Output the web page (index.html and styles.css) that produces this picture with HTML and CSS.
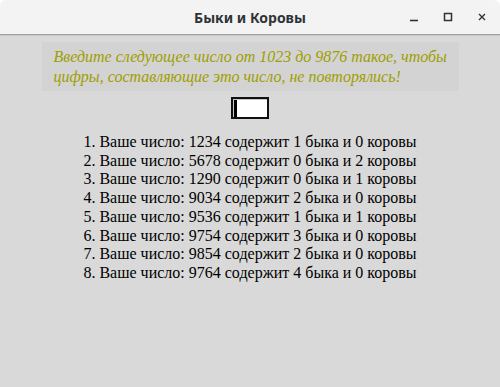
FILE: index.html
```html
<!DOCTYPE html>
<html>
<head>
    <meta charset="UTF-8">
    <title>Быки и Коровы</title>
    <link rel="stylesheet" href="styles.css">
</head>
<body>
    <div class="window">
        <header class="titlebar">
            <span></span>
            <h1 class="title">Быки и Коровы</h1>
            <div class="controls">
                <button class="ctl" aria-label="Свернуть">
                    <svg width="10" height="10" viewBox="0 0 10 10"><path d="M1 8.5h8" stroke="#2e3436" stroke-width="1.6"/></svg>
                </button>
                <button class="ctl" aria-label="Развернуть">
                    <svg width="10" height="10" viewBox="0 0 10 10"><rect x="1.5" y="1.5" width="7" height="7" fill="none" stroke="#2e3436" stroke-width="1.5"/></svg>
                </button>
                <button class="ctl" aria-label="Закрыть">
                    <svg width="10" height="10" viewBox="0 0 10 10"><path d="M2 2l6 6M8 2l-6 6" stroke="#2e3436" stroke-width="1.4"/></svg>
                </button>
            </div>
        </header>

        <main class="content">
            <p class="notice">Введите следующее число от 1023 до 9876 такое, чтобы цифры, составляющие это число, не повторялись!</p>

            <div class="entry">
                <input type="text" class="guess" id="guess">
            </div>

            <ol class="history">
                <li>Ваше число: 1234 содержит 1 быка и 0 коровы</li>
                <li>Ваше число: 5678 содержит 0 быка и 2 коровы</li>
                <li>Ваше число: 1290 содержит 0 быка и 1 коровы</li>
                <li>Ваше число: 9034 содержит 2 быка и 0 коровы</li>
                <li>Ваше число: 9536 содержит 1 быка и 1 коровы</li>
                <li>Ваше число: 9754 содержит 3 быка и 0 коровы</li>
                <li>Ваше число: 9854 содержит 2 быка и 0 коровы</li>
                <li>Ваше число: 9764 содержит 4 быка и 0 коровы</li>
            </ol>
        </main>
    </div>
</body>
</html>
```

FILE: styles.css
```css
body {
    margin: 0;
    padding: 0;
    background-color: #ffffff;
    font-family: "Liberation Serif", serif;
}

.window {
    height: 100vh;
    display: flex;
    flex-direction: column;
}

.titlebar {
    height: 34px;
    display: grid;
    grid-template-columns: 1fr auto 1fr;
    align-items: center;
    background-color: #f3f3f3;
    border-bottom: 1px solid #a2a2a2;
    border-radius: 6px 6px 0 0;
}

.title {
    margin: 0;
    font-family: "Noto Sans", sans-serif;
    font-size: 14px;
    font-weight: bold;
    color: #2e3436;
    padding-top: 1px;
}

.controls {
    display: flex;
    justify-content: flex-end;
    padding-right: 1px;
}

.ctl {
    width: 34px;
    height: 34px;
    padding: 0;
    border: none;
    background: none;
    display: flex;
    align-items: center;
    justify-content: center;
}

.content {
    flex: 1;
    background-color: #d9d9d9;
    border-top: 1px solid #c6c6c6;
    display: flex;
    flex-direction: column;
    align-items: center;
}

.notice {
    width: 403px;
    margin: 6px 0 0;
    padding: 5px 2px 4px 12px;
    background-color: #d3d3d3;
    color: #9e9e00;
    font-style: italic;
    font-size: 16px;
    line-height: 20px;
}

.entry {
    position: relative;
    margin-top: 6px;
}

.guess {
    display: block;
    box-sizing: border-box;
    width: 38px;
    height: 22px;
    border: 2px solid #111;
    box-shadow: inset 1px 1px 0 #c8c8c8;
    background-color: #fff;
    padding: 0;
    outline: none;
}

.entry::after {
    content: "";
    position: absolute;
    left: 3px;
    top: 3px;
    width: 3px;
    height: 17px;
    background-color: #000;
}

.history {
    margin: 14px 0 0;
    padding: 0;
    list-style-position: inside;
    text-align: center;
    font-size: 16px;
    line-height: 18.7px;
    color: #000;
}
```
